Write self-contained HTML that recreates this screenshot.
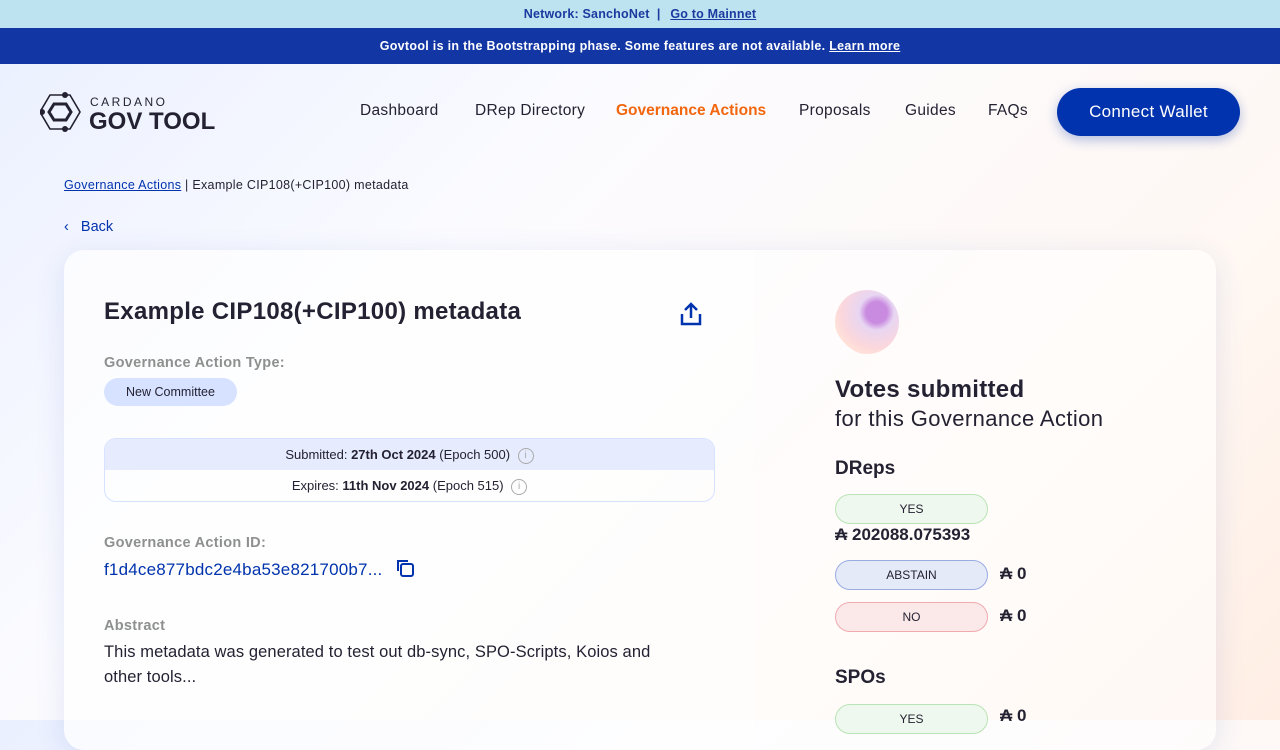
<!DOCTYPE html>
<html><head><meta charset="utf-8"><style>
*{margin:0;padding:0;box-sizing:border-box}
body{width:1280px;height:720px;overflow:hidden;font-family:"Liberation Sans",sans-serif;color:#242232;background:linear-gradient(135deg,#eaf0ff 0%,#fbfbff 35%,#fff8f3 75%,#ffeee4 100%);position:relative}
.top1{height:28px;background:#bde3f0;text-align:center;font-size:12.5px;font-weight:bold;color:#1b3aa0;line-height:28px;letter-spacing:.2px}
.top1 u{margin-left:6px}
.top2{height:36px;background:#1236a4;color:#fff;text-align:center;font-size:12.5px;font-weight:bold;line-height:36px;letter-spacing:.3px}
.nav{position:absolute;top:88px;left:0;width:1280px;height:48px}
.logo{position:absolute;left:40px;top:3px}
.links span{position:absolute;top:0;line-height:46px;font-size:15.5px;color:#242232;letter-spacing:.3px;white-space:nowrap}
.btn{position:absolute;left:1057px;top:0;width:183px;height:48px;border-radius:24px;background:#0033ad;color:#fff;font-size:17px;text-align:center;line-height:48px;box-shadow:0 4px 12px rgba(0,51,173,.3);letter-spacing:.3px}
.bc{position:absolute;left:64px;top:178px;font-size:12.5px;letter-spacing:.3px}
.bc a{color:#0033ad;text-decoration:underline}
.back{position:absolute;left:64px;top:219px;font-size:14.5px;color:#0033ad}
.card{position:absolute;left:64px;top:250px;width:1152px;height:500px;border-radius:20px;background:rgba(255,255,255,.55);box-shadow:0 6px 30px rgba(40,70,180,.12)}
.left{position:absolute;left:0;top:0;width:690px;height:500px;background:rgba(255,255,255,.4);border-radius:20px 0 0 20px}
h1{position:absolute;left:40px;top:48px;font-size:24px;font-weight:bold;letter-spacing:.3px}
.lab{position:absolute;left:40px;font-size:14.5px;font-weight:bold;color:#8e908e;letter-spacing:.3px}
.pill{position:absolute;left:40px;top:128px;height:28px;width:133px;text-align:center;border-radius:14px;background:#d6e2ff;font-size:12.5px;line-height:28px}
.dates{position:absolute;left:40px;top:188px;width:611px;height:64px;border:1px solid #d6e2ff;border-radius:12px;overflow:hidden;font-size:13px;text-align:center;color:#242232}
.dates div{height:31px;line-height:31px}
.i{display:inline-block;width:16px;height:16px;border:1.3px solid #aaa;border-radius:50%;vertical-align:middle;margin-left:4px;font-size:10px;line-height:13px;color:#aaa}
.id{position:absolute;left:40px;top:310px;font-size:17px;color:#0033ad;letter-spacing:.2px}
.abs{position:absolute;left:40px;top:390px;width:575px;font-size:16.5px;line-height:25px;letter-spacing:.1px}
.r{position:absolute;left:771px}
.vp{position:absolute;left:771px;width:153px;height:30px;border-radius:15px;font-size:12px;text-align:center;line-height:28px}
.y{background:#eff8ee;border:1px solid #b9e4b5}.a{background:#e4eaf7;border:1px solid #99abe3}.n{background:#fbe9ea;border:1px solid #f0aab0}
.amt{position:absolute;font-size:17px;font-weight:bold}
</style></head><body>
<div class="top1">Network: SanchoNet &nbsp;| <u>Go to Mainnet</u></div>
<div class="top2">Govtool is in the Bootstrapping phase. Some features are not available. <u>Learn more</u></div>
<div class="nav">
<div class="logo"><svg width="180" height="42" viewBox="0 0 180 42"><g fill="none" stroke="#242232" stroke-width="2.5"><path d="M10 4h20l10 17-10 17H10L0 21z" stroke-width="1.6"/><path d="M14 13h12l5 8-5 8H14l-5-8z" stroke-width="3"/></g><circle cx="2" cy="21" r="3" fill="#242232"/><circle cx="25" cy="4" r="3" fill="#242232"/><circle cx="25" cy="38" r="3" fill="#242232"/><text x="50" y="15" font-family="Liberation Sans" font-size="12" letter-spacing="2.5" fill="#242232">CARDANO</text><text x="49" y="38" font-family="Liberation Sans" font-weight="bold" font-size="24" fill="#242232">GOV TOOL</text></svg></div>
<div class="links"><span style="left:360px">Dashboard</span><span style="left:475px">DRep Directory</span><span style="left:616px;color:#f2660d;font-weight:bold;letter-spacing:0">Governance Actions</span><span style="left:799px">Proposals</span><span style="left:905px">Guides</span><span style="left:988px">FAQs</span></div>
<div class="btn">Connect Wallet</div>
</div>
<div class="bc"><a>Governance Actions</a> | Example CIP108(+CIP100) metadata</div>
<div class="back">‹&nbsp;&nbsp; Back</div>
<div class="card">
<div class="left"></div>
<h1>Example CIP108(+CIP100) metadata</h1>
<svg style="position:absolute;left:615px;top:51px" width="24" height="26" viewBox="0 0 24 26"><path d="M12 17V3M6 9l6-6 6 6M3 13v10h18V13" fill="none" stroke="#0033ad" stroke-width="2.5"/></svg>
<div class="lab" style="top:105px">Governance Action Type:</div>
<div class="pill">New Committee</div>
<div class="dates"><div style="background:#e6ecfd">Submitted: <b>27th Oct 2024</b> (Epoch 500) <span class="i">i</span></div><div>Expires: <b>11th Nov 2024</b> (Epoch 515) <span class="i">i</span></div></div>
<div class="lab" style="top:285px">Governance Action ID:</div>
<div class="id">f1d4ce877bdc2e4ba53e821700b7...</div>
<svg style="position:absolute;left:331px;top:308px" width="20" height="20" viewBox="0 0 20 20"><rect x="6" y="6" width="12" height="12" rx="2" fill="none" stroke="#0033ad" stroke-width="2"/><path d="M3 13V3h10" fill="none" stroke="#0033ad" stroke-width="2"/></svg>
<div class="lab" style="top:368px">Abstract</div>
<div class="abs">This metadata was generated to test out db-sync, SPO-Scripts, Koios and<br>other tools...</div>
<div style="position:absolute;left:771px;top:40px;width:64px;height:64px;border-radius:50%;background:radial-gradient(circle at 65% 35%,#c98be0 0 18%,#e8d6f2 30%,#fbd7dc 60%,#ffe2d8 75%,transparent 76%)"></div>
<div class="r" style="top:126px;font-size:24px;font-weight:bold;letter-spacing:.3px">Votes submitted</div>
<div class="r" style="top:156px;font-size:22px;letter-spacing:.4px">for this Governance Action</div>
<div class="r" style="top:208px;font-size:19px;font-weight:bold">DReps</div>
<div class="vp y" style="top:244px">YES</div>
<div class="amt" style="left:771px;top:275px">₳ 202088.075393</div>
<div class="vp a" style="top:310px">ABSTAIN</div><div class="amt" style="left:936px;top:314px">₳ 0</div>
<div class="vp n" style="top:352px">NO</div><div class="amt" style="left:936px;top:356px">₳ 0</div>
<div class="r" style="top:417px;font-size:19px;font-weight:bold">SPOs</div>
<div class="vp y" style="top:454px">YES</div><div class="amt" style="left:936px;top:456px">₳ 0</div>
</div>
</body></html>
